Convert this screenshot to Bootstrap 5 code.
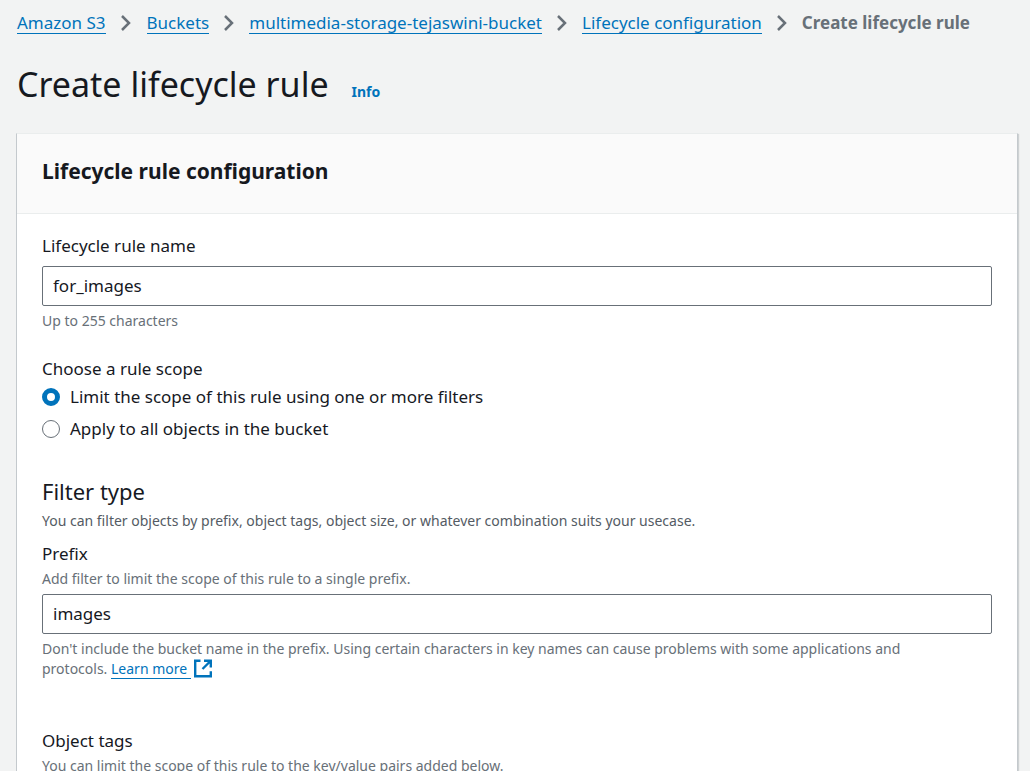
<!DOCTYPE html>
<html lang="en">
<head>
<meta charset="utf-8">
<meta name="viewport" content="width=device-width, initial-scale=1">
<title>Create lifecycle rule</title>
<link href="https://cdn.jsdelivr.net/npm/bootstrap@5.3.0/dist/css/bootstrap.min.css" rel="stylesheet">
<style>
  :root { --ink: #16191f; --muted: #687078; --accent: #0073bb; }
  body { font-family: "Noto Sans", sans-serif; font-size: 17px; line-height: 24px; color: var(--ink); background: #f2f3f3; }
  a { color: var(--accent); }
  .scroll-pane { scrollbar-width: none; padding: 11px 12px 0 16px; }
  .scroll-pane::-webkit-scrollbar { display: none; }
  .crumbs { gap: 15px; padding-left: 1px; }
  .crumbs li { gap: 15px; white-space: nowrap; }
  .crumbs a, .learn { text-decoration: none; border-bottom: 1px solid var(--accent); }
  .crumbs a { line-height: 21px; }
  .crumbs .current { color: var(--muted); font-weight: 700; }
  .page-title { font-size: 34px; line-height: 44px; font-weight: 400; }
  .title-row { gap: 23px; margin: 27px 0 27px 1px; }
  .info { font-size: 14px; font-weight: 700; text-decoration: none; }
  .panel { background: #fff; border: 1px solid #eaeded; border-left-color: #c4c9cd; border-right-color: #c4c9cd; box-shadow: 1px 1px 1px rgba(0,28,36,.15); }
  .panel-head { background: #fafafa; border-bottom: 1px solid #eaeded; padding: 22px 25px 27px; }
  .panel-head h2 { font-size: 21px; line-height: 30px; font-weight: 700; }
  .panel-body { padding: 20px 25px 60px; }
  .hint { font-size: 14px; line-height: 20px; color: var(--muted); }
  .hint-dark { color: #545b64; }
  .field { border: 1px solid var(--muted); border-radius: 2px; height: 40px; padding: 0 10px 2px; font-size: 17px; color: var(--ink); }
  .field + .hint { margin-top: 5px; }
  .field-label { display: block; font-size: 17px; line-height: 24px; }
  .field-label + .hint { margin-top: 3px; }
  .hint + .field { margin-top: 5px; }
  .learn + svg { margin-left: 1px; vertical-align: -4px; }
  .scope-group { margin-top: 26px; }
  .scope { gap: 10px; line-height: 24px; }
  .scope input { appearance: none; width: 18px; height: 18px; border: 1px solid var(--muted); border-radius: 50%; background: #fff; margin: 0; flex: none; }
  .scope input:checked { border: 5px solid var(--accent); }
  .section-title { font-size: 22px; line-height: 30px; font-weight: 400; margin: 35px 0 5px; }
  .filter-block { margin-top: 11px; }
  .tags-block { margin-top: 50px; }
</style>
</head>
<body>
<main class="scroll-pane vh-100 overflow-auto">
  <nav aria-label="Breadcrumb">
    <ol class="crumbs list-unstyled d-flex mb-0">
      <li class="d-flex align-items-center"><a href="#">Amazon S3</a>
        <svg width="11" height="16" viewBox="0 0 11 16" fill="none" stroke="#687078" stroke-width="2.5"><path d="M1 1l7 7-7 7"/></svg></li>
      <li class="d-flex align-items-center"><a href="#">Buckets</a>
        <svg width="10" height="16" viewBox="0 0 10 16" fill="none" stroke="#687078" stroke-width="2.5"><path d="M1 1l7 7-7 7"/></svg></li>
      <li class="d-flex align-items-center"><a href="#">multimedia-storage-tejaswini-bucket</a>
        <svg width="10" height="16" viewBox="0 0 10 16" fill="none" stroke="#687078" stroke-width="2.5"><path d="M1 1l7 7-7 7"/></svg></li>
      <li class="d-flex align-items-center"><a href="#">Lifecycle configuration</a>
        <svg width="10" height="16" viewBox="0 0 10 16" fill="none" stroke="#687078" stroke-width="2.5"><path d="M1 1l7 7-7 7"/></svg></li>
      <li class="current" aria-current="page">Create lifecycle rule</li>
    </ol>
  </nav>

  <div class="title-row d-flex align-items-baseline">
    <h1 class="page-title mb-0">Create lifecycle rule</h1>
    <a class="info" href="#">Info</a>
  </div>

  <section class="panel">
    <header class="panel-head"><h2 class="mb-0">Lifecycle rule configuration</h2></header>
    <form class="panel-body">
      <div>
        <label class="field-label mb-2" for="rule-name">Lifecycle rule name</label>
        <input class="field w-100 d-block" id="rule-name" type="text" value="for_images">
        <div class="hint">Up to 255 characters</div>
      </div>

      <fieldset class="scope-group">
        <legend class="field-label mb-1">Choose a rule scope</legend>
        <div class="scope d-flex align-items-center mb-2">
          <input type="radio" name="scope" id="scope-limit" checked>
          <label for="scope-limit">Limit the scope of this rule using one or more filters</label>
        </div>
        <div class="scope d-flex align-items-center">
          <input type="radio" name="scope" id="scope-all">
          <label for="scope-all">Apply to all objects in the bucket</label>
        </div>
      </fieldset>

      <h3 class="section-title">Filter type</h3>
      <p class="hint hint-dark mb-0">You can filter objects by prefix, object tags, object size, or whatever combination suits your usecase.</p>

      <div class="filter-block">
        <label class="field-label" for="prefix">Prefix</label>
        <div class="hint">Add filter to limit the scope of this rule to a single prefix.</div>
        <input class="field w-100 d-block" id="prefix" type="text" value="images">
        <div class="hint pe-5">Don't include the bucket name in the prefix. Using certain characters in key names can cause problems with some applications and protocols. <a class="learn" href="#">Learn more&nbsp;</a><svg width="20" height="19" viewBox="0 0 20 19" fill="none" stroke="#0073bb" stroke-width="2.4"><path d="M8.500 1.700H3.200v15.600h15.600v-5M12 1.700h6.800v6.800M18.500 2L10.500 10"/></svg></div>
      </div>

      <div class="tags-block">
        <div class="field-label">Object tags</div>
        <div class="hint">You can limit the scope of this rule to the key/value pairs added below.</div>
      </div>
    </form>
  </section>
</main>
<script src="https://cdn.jsdelivr.net/npm/bootstrap@5.3.0/dist/js/bootstrap.bundle.min.js"></script>
</body>
</html>
